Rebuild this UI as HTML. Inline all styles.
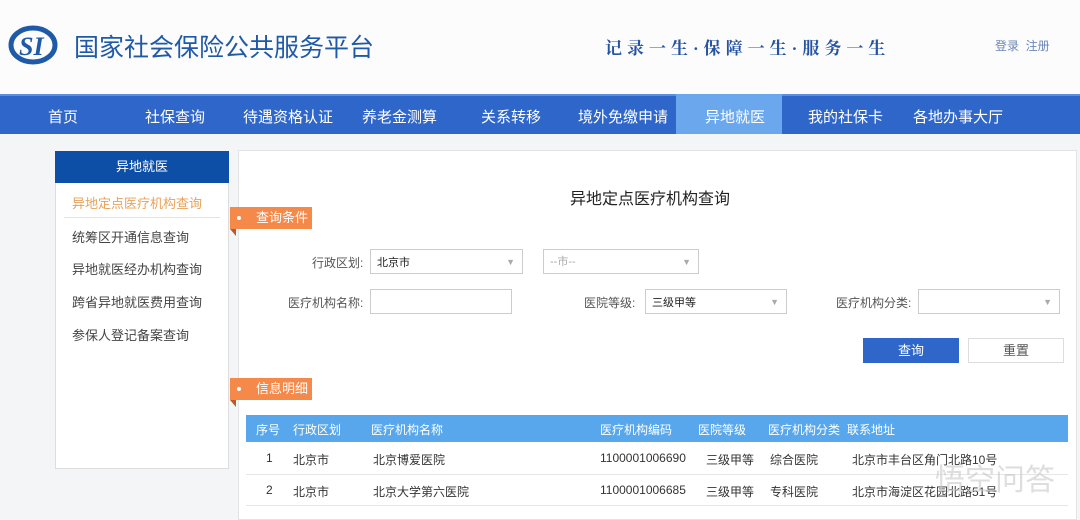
<!DOCTYPE html><html><head><meta charset="utf-8"><style>
*{margin:0;padding:0;box-sizing:border-box}
body{width:1080px;height:512px;overflow:hidden;background:#f4f5f7;font-family:"Liberation Sans","Noto Sans CJK SC",sans-serif;position:relative;color:#333}
.a{position:absolute;white-space:nowrap}
.hdr{left:0;top:0;width:1080px;height:94px;background:#fcfcfd}
.nav{left:0;top:94px;width:1080px;height:40px;background:#2f66c9;border-top:2px solid #5d8fe0}
.nav span{position:absolute;top:10px;color:#fff;font-size:15px}
.side{left:55px;top:151px;width:174px;height:318px;background:#fff;border:1px solid #ddd}
.sh{left:55px;top:151px;width:174px;height:32px;background:#0d4fa6;color:#fff;font-size:13px;text-align:center;line-height:32px}
.si{left:72px;font-size:13px;color:#444}
.main{left:238px;top:150px;width:839px;height:370px;background:#fff;border:1px solid #e3e3e3}
.tag{left:230px;width:82px;height:22px;background:#f5894a;color:#fff;font-size:13px;line-height:22px;padding-left:26px}
.tag:before{content:"";position:absolute;left:7px;top:9px;width:4px;height:4px;border-radius:2px;background:#fff}
.tag:after{content:"";position:absolute;left:0;top:22px;border-top:7px solid #b85a2a;border-left:6px solid transparent}
.lb{font-size:12px;color:#555}
.in{height:25px;border:1px solid #ccc;background:#fff;font-size:11px;line-height:23px;padding-left:6px;color:#222}
.in i{position:absolute;right:7px;top:0;font-style:normal;color:#aaa;font-size:9px}
.th{left:246px;top:415px;width:822px;height:27px;background:#58a7ec}
.th span{position:absolute;top:6px;color:#fff;font-size:12px}
.td{font-size:12px;color:#333}
.ln{left:246px;width:822px;height:1px;background:#e6e6e6}
</style></head><body>
<div class="a hdr"></div>
<svg class="a" style="left:8px;top:24px" width="52" height="42" viewBox="0 0 52 42"><ellipse cx="25" cy="21" rx="22" ry="17" fill="none" stroke="#1f5aa8" stroke-width="5"/><text x="11" y="31" font-family="Liberation Serif" font-style="italic" font-weight="bold" font-size="26" fill="#1f5aa8">SI</text></svg>
<div class="a" style="left:74px;top:28px;font-size:25px;color:#1f5aa8">国家社会保险公共服务平台</div>
<div class="a" style="left:605px;top:34px;font-size:17px;color:#2453a3;font-weight:bold;letter-spacing:5px;font-family:'Liberation Serif','Noto Serif CJK SC',serif">记录一生·保障一生·服务一生</div>
<div class="a" style="left:995px;top:37px;font-size:12px;color:#6a86b8">登录&nbsp;&nbsp;注册</div>
<div class="a nav"><div style="position:absolute;left:676px;top:-2px;width:106px;height:40px;background:#6aa7ec"></div>
<span style="left:48px">首页</span><span style="left:145px">社保查询</span><span style="left:243px">待遇资格认证</span><span style="left:362px">养老金测算</span><span style="left:481px">关系转移</span><span style="left:578px">境外免缴申请</span><span style="left:705px">异地就医</span><span style="left:808px">我的社保卡</span><span style="left:913px">各地办事大厅</span></div>
<div class="a side"></div><div class="a sh">异地就医</div>
<div class="a si" style="top:193px;color:#e8a25a">异地定点医疗机构查询</div>
<div class="a" style="left:64px;top:217px;width:156px;height:1px;background:#e3e3e3"></div>
<div class="a si" style="top:227px">统筹区开通信息查询</div>
<div class="a si" style="top:259px">异地就医经办机构查询</div>
<div class="a si" style="top:292px">跨省异地就医费用查询</div>
<div class="a si" style="top:325px">参保人登记备案查询</div>
<div class="a main"></div>
<div class="a" style="left:570px;top:185px;font-size:16px;color:#222">异地定点医疗机构查询</div>
<div class="a tag" style="top:207px">查询条件</div>
<div class="a lb" style="left:312px;top:254px">行政区划:</div>
<div class="a in" style="left:370px;top:249px;width:153px;line-height:27px">北京市<i style="line-height:25px">▼</i></div>
<div class="a in" style="left:543px;top:249px;width:156px;color:#aaa;line-height:25px">--市--<i>▼</i></div>
<div class="a lb" style="left:288px;top:294px">医疗机构名称:</div>
<div class="a in" style="left:370px;top:289px;width:142px"></div>
<div class="a lb" style="left:584px;top:294px">医院等级:</div>
<div class="a in" style="left:645px;top:289px;width:142px;line-height:27px">三级甲等<i style="line-height:25px">▼</i></div>
<div class="a lb" style="left:836px;top:294px">医疗机构分类:</div>
<div class="a in" style="left:918px;top:289px;width:142px"><i style="line-height:25px">▼</i></div>
<div class="a" style="left:863px;top:338px;width:96px;height:25px;background:#2f66c9;color:#fff;font-size:13px;text-align:center;line-height:25px">查询</div>
<div class="a" style="left:968px;top:338px;width:96px;height:25px;border:1px solid #ddd;background:#fff;color:#555;font-size:13px;text-align:center;line-height:23px">重置</div>
<div class="a tag" style="top:378px">信息明细</div>
<div class="a th"><span style="left:10px">序号</span><span style="left:47px">行政区划</span><span style="left:125px">医疗机构名称</span><span style="left:354px">医疗机构编码</span><span style="left:452px">医院等级</span><span style="left:522px">医疗机构分类</span><span style="left:601px">联系地址</span></div>
<div class="a td" style="left:266px;top:451px">1</div><div class="a td" style="left:293px;top:451px">北京市</div><div class="a td" style="left:373px;top:451px">北京博爱医院</div><div class="a td" style="left:600px;top:451px">1100001006690</div><div class="a td" style="left:706px;top:451px">三级甲等</div><div class="a td" style="left:770px;top:451px">综合医院</div><div class="a td" style="left:852px;top:451px">北京市丰台区角门北路10号</div>
<div class="a ln" style="top:474px"></div>
<div class="a td" style="left:266px;top:483px">2</div><div class="a td" style="left:293px;top:483px">北京市</div><div class="a td" style="left:373px;top:483px">北京大学第六医院</div><div class="a td" style="left:600px;top:483px">1100001006685</div><div class="a td" style="left:706px;top:483px">三级甲等</div><div class="a td" style="left:770px;top:483px">专科医院</div><div class="a td" style="left:852px;top:483px">北京市海淀区花园北路51号</div>
<div class="a ln" style="top:505px"></div>
<div class="a" style="left:935px;top:455px;font-size:30px;color:rgba(200,200,200,0.6)">悟空问答</div>
</body></html>
